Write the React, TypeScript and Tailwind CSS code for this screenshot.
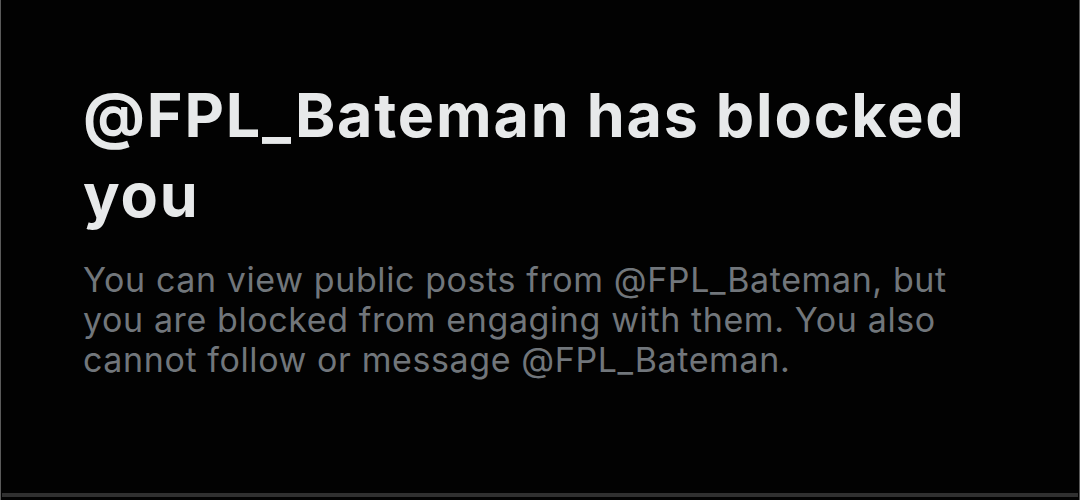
export default function App() {
  return (
    <div className="w-[1080px] h-[500px] bg-[#020202] border-l border-r border-[#5a5a5a] flex flex-col overflow-hidden">
      <div className="flex-1 px-[82px] pt-[75px]" style={{ fontFamily: 'Inter, "Noto Sans", sans-serif' }}>
        <h1 className="w-[900px] text-[61px] leading-[80px] font-bold text-[#e7e9ea] tracking-[1.8px]">
          @FPL_Bateman has blocked you
        </h1>
        <p className="w-[885px] mt-[25px] text-[34px] leading-[40px] text-[#71767b] tracking-[0.6px]">
          You can view public posts from @FPL_Bateman, but you are blocked from engaging with them. You also cannot follow or message @FPL_Bateman.
        </p>
      </div>
      <div className="h-[4px] mb-[3px] mx-[1px] bg-[#303030]" />
    </div>
  );
}
